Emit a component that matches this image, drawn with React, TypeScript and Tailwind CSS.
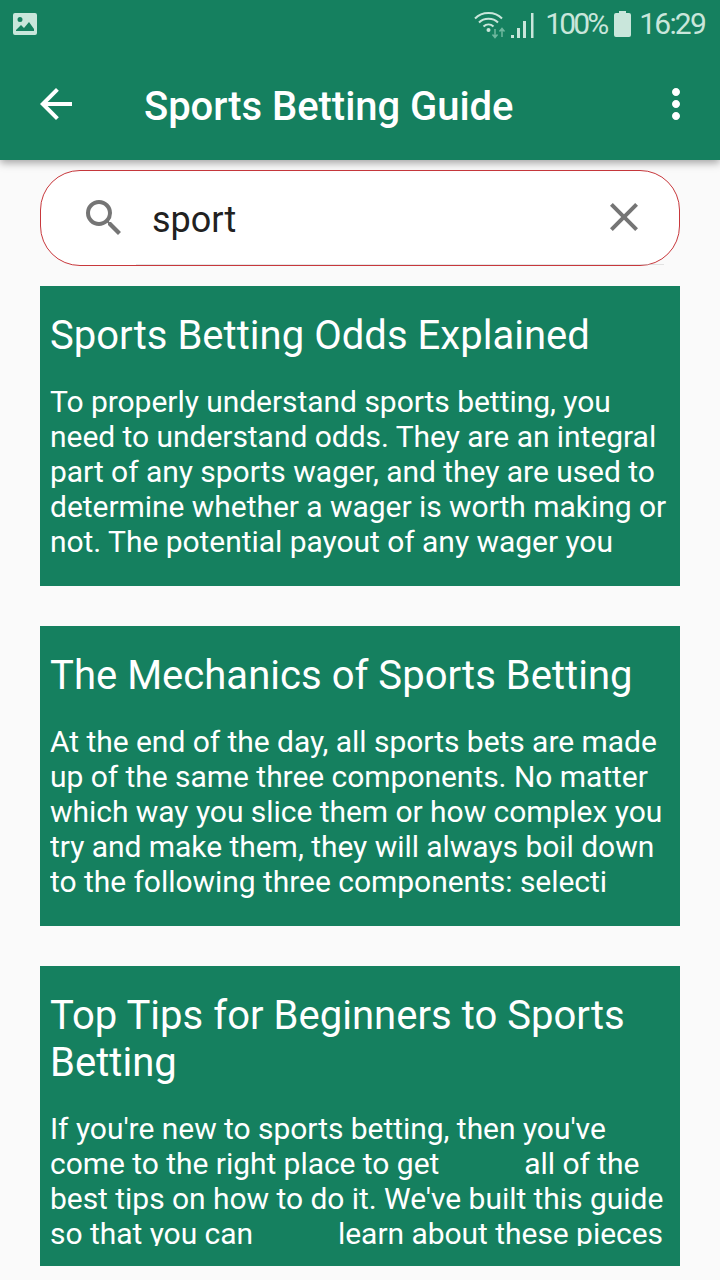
import { MdArrowBack, MdClose, MdMoreVert, MdSearch } from 'react-icons/md'

const articles = [
  {
    title: 'Sports Betting Odds Explained',
    lines: [
      'To properly understand sports betting, you',
      'need to understand odds. They are an integral',
      'part of any sports wager, and they are used to',
      'determine whether a wager is worth making or',
      'not. The potential payout of any wager you',
    ],
  },
  {
    title: 'The Mechanics of Sports Betting',
    lines: [
      'At the end of the day, all sports bets are made',
      'up of the same three components. No matter',
      'which way you slice them or how complex you',
      'try and make them, they will always boil down',
      'to the following three components: selecti',
    ],
  },
  {
    title: 'Top Tips for Beginners to Sports Betting',
    lines: [
      "If you're new to sports betting, then you've",
      'come to the right place to get|all of the',
      "best tips on how to do it. We've built this guide",
      'so that you can|learn about these pieces',
    ],
  },
]

function StatusBar() {
  return (
    <div className="h-12 flex items-center justify-between pl-3 pr-[15px] text-[#c9e6db]">
      <svg width="26" height="24" viewBox="0 0 26 24">
        <path fill="currentColor" fillRule="evenodd" d="M3 1h20a2 2 0 0 1 2 2v18a2 2 0 0 1-2 2H3a2 2 0 0 1-2-2V3a2 2 0 0 1 2-2zM8 5a2.5 2.5 0 1 0 0 5 2.5 2.5 0 0 0 0-5zM4 18l5-5 3 3 5-6 5 7v2H4z" />
      </svg>
      <div className="flex items-center">
        <svg width="37" height="30" viewBox="0 0 37 30" className="mt-[-1px]">
          <g fill="none" stroke="currentColor" strokeWidth="2">
            <path d="M1 9.5C8 2 21 2 28 9.5" />
            <path d="M5 13.5c5-5 14-5 19 0" />
            <path d="M9.500 17.500c3-2.800 7-2.800 10 0" />
          </g>
          <circle cx="14.500" cy="21" r="2" fill="currentColor" />
          <path d="M21 20v8M18.500 25.500l2.500 3 2.500-3M28 28v-8M25.500 22.500l2.500-3 2.500 3" fill="none" stroke="#6fb89f" strokeWidth="1.500" />
        </svg>
        <svg width="23" height="30" viewBox="0 0 23 30">
          <path fill="currentColor" d="M0 26h3v3H0zM6 19h3v10H6zM12 12h3v17h-3zM20 4h2.500v25H20z" />
        </svg>
        <span className="ml-[11px] text-[30px] leading-none tracking-[-2.9px]">100%</span>
        <svg width="17" height="26" viewBox="0 0 17 26" className="ml-2">
          <path fill="currentColor" d="M5 0h7v2h3a2 2 0 0 1 2 2v20a2 2 0 0 1-2 2H2a2 2 0 0 1-2-2V4a2 2 0 0 1 2-2h3z" />
        </svg>
        <span className="ml-2 text-[30px] leading-none tracking-[-1.8px]">16:29</span>
      </div>
    </div>
  )
}

export default function App() {
  return (
    <div className="w-[720px] h-[1280px] overflow-hidden bg-[#fafafa] font-['Roboto',sans-serif]">
      <header className="relative z-10 h-40 bg-[#15805f] shadow-[0_3px_8px_rgba(0,0,0,0.35)]">
        <StatusBar />
        <div className="h-28 flex items-center text-white">
          <MdArrowBack className="ml-8 shrink-0" size={48} />
          <h1 className="ml-[64px] text-[40px] font-medium leading-none mt-[6px] tracking-[-0.05px]">Sports Betting Guide</h1>
          <MdMoreVert className="ml-auto mr-5 shrink-0" size={48} />
        </div>
      </header>

      <main className="pt-[10px] px-10">
        <div className="relative h-24 flex items-center rounded-[40px] border border-[#c8383c] bg-white pl-[39px] pr-[31px]">
          <MdSearch className="text-[#757575] shrink-0" size={48} />
          <span className="ml-6 text-[36px] leading-none text-[#212121] mt-1">sport</span>
          <MdClose className="ml-auto text-[#757575] shrink-0 mt-[-2px]" size={48} />
          <div className="absolute left-[95px] right-[15px] bottom-0 h-px bg-[#bdbdbd]/40" />
        </div>

        <div className="mt-5 flex flex-col gap-10">
          {articles.map((a) => (
            <article key={a.title} className="h-[300px] flex flex-col bg-[#15805f] text-white pt-[26px] pb-5 px-[10px]">
              <h2 className="text-[40px] leading-[47px] tracking-[0.03px]">{a.title}</h2>
              <div className="mt-[25px] flex-1 min-h-0 overflow-hidden text-[30px] leading-[35px] tracking-[-0.04px]">
                {a.lines.map((l) => {
                  const [before, after] = l.split('|')
                  return (
                    <div key={l} className="whitespace-nowrap">
                      {before}
                      {after && <span className="inline-block w-[85px]" />}
                      {after}
                    </div>
                  )
                })}
              </div>
            </article>
          ))}
        </div>
      </main>
    </div>
  )
}
